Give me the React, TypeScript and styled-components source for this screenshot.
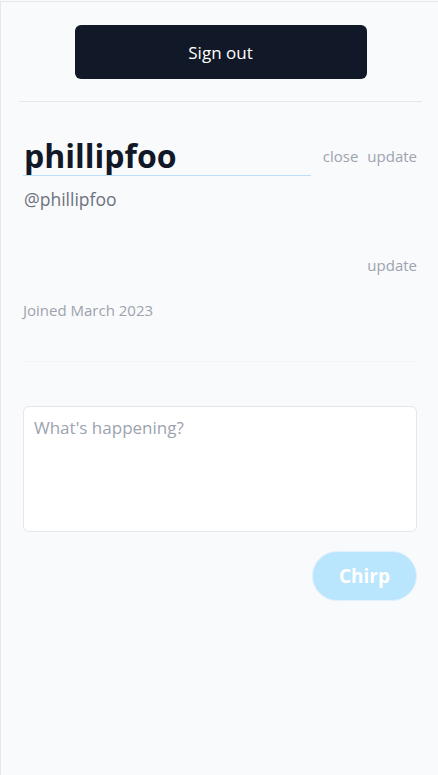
import styled, { createGlobalStyle } from 'styled-components';

const GlobalStyle = createGlobalStyle`
  html, body {
    margin: 0;
    padding: 0;
    background: #f9fafb;
  }
  body {
    padding-top: 1px;
    font-family: 'Open Sans', 'Noto Sans', sans-serif;
    color: #111827;
  }
`;

const Page = styled.main`
  min-height: calc(100vh - 1px);
  box-sizing: border-box;
  background: #f9fafb;
  border-top: 1px solid #e5e7eb;
  border-left: 1px solid #e5e7eb;
`;

const Header = styled.div`
  padding: 23px 16px 0 18px;
`;

const SignOutButton = styled.button`
  display: flex;
  align-items: center;
  justify-content: center;
  width: 292px;
  height: 54px;
  margin: 0 auto 22px;
  border: none;
  border-radius: 6px;
  background: #111827;
  color: #ffffff;
  font-family: inherit;
  font-size: 17px;
  cursor: pointer;
`;

const Divider = styled.hr<{ $faint?: boolean }>`
  margin: 0;
  border: none;
  border-top: 1px solid ${(p) => (p.$faint ? '#f3f4f6' : '#e5e7eb')};
`;

const Profile = styled.section`
  padding: 33px 21px 0 22px;
`;

const NameRow = styled.div`
  display: flex;
  align-items: center;
`;

const NameInput = styled.input`
  width: 288px;
  height: 41px;
  box-sizing: border-box;
  padding: 0 0 0 1px;
  border: none;
  border-bottom: 1.5px solid #b9e2f8;
  background: transparent;
  font-family: inherit;
  font-size: 32px;
  font-weight: 700;
  color: #111827;
  outline: none;
`;

const Actions = styled.div`
  display: flex;
  gap: 9px;
  margin-left: auto;
`;

const TextLink = styled.span`
  font-size: 15px;
  color: #9ca3af;
  cursor: pointer;
`;

const Handle = styled.div`
  margin-top: 10px;
  padding-left: 1px;
  font-size: 17.5px;
  line-height: 26px;
  color: #6b7280;
`;

const BioRow = styled.div`
  display: flex;
  justify-content: flex-end;
  margin-top: 42px;
  height: 22px;
  align-items: center;
`;

const Joined = styled.div`
  margin-top: 24px;
  font-size: 15px;
  line-height: 20px;
  color: #9ca3af;
`;

const Composer = styled.section`
  padding: 0 21px 0 22px;
`;

const ComposerDivider = styled(Divider)`
  margin: 41px 0 0 0;
`;

const TextArea = styled.textarea`
  display: block;
  width: 100%;
  height: 126px;
  box-sizing: border-box;
  margin-top: 44px;
  padding: 8px 10px;
  border: 1px solid #e5e7eb;
  border-radius: 6px;
  background: #ffffff;
  font-family: inherit;
  font-size: 17px;
  line-height: 26px;
  color: #111827;
  resize: none;
  outline: none;

  &::placeholder {
    color: #9ca3af;
  }
`;

const ComposerFooter = styled.div`
  display: flex;
  justify-content: flex-end;
  margin-top: 19px;
`;

const ChirpButton = styled.button`
  width: 105px;
  height: 50px;
  border: 1px solid #e0f2fe;
  border-radius: 9999px;
  background: #bae6fd;
  color: #ffffff;
  font-family: inherit;
  font-size: 19px;
  font-weight: 700;
  cursor: not-allowed;
`;

export default function App() {
  return (
    <>
      <GlobalStyle />
      <Page>
        <Header>
          <SignOutButton>Sign out</SignOutButton>
          <Divider />
        </Header>
        <Profile>
          <NameRow>
            <NameInput defaultValue="phillipfoo" />
            <Actions>
              <TextLink>close</TextLink>
              <TextLink>update</TextLink>
            </Actions>
          </NameRow>
          <Handle>@phillipfoo</Handle>
          <BioRow>
            <TextLink>update</TextLink>
          </BioRow>
          <Joined>Joined March 2023</Joined>
        </Profile>
        <Composer>
          <ComposerDivider $faint />
          <TextArea placeholder="What's happening?" />
          <ComposerFooter>
            <ChirpButton disabled>Chirp</ChirpButton>
          </ComposerFooter>
        </Composer>
      </Page>
    </>
  );
}
